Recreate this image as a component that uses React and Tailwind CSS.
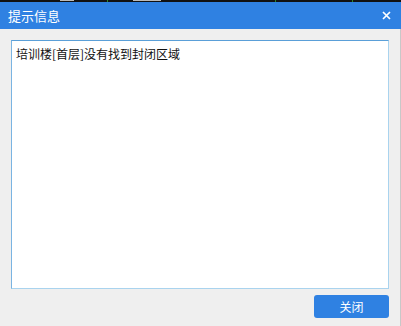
import React from 'react';

const font = { fontFamily: '"Noto Sans CJK SC", "Liberation Sans", sans-serif' };

export default function App() {
  return (
    <div className="w-[401px] h-[326px] flex flex-col bg-[#efefef] overflow-hidden" style={font}>
      {/* strip of the window behind */}
      <div className="h-[2px] bg-[#111] flex">
        <div className="w-[60px]" />
        <div className="w-[14px] bg-[#bbb] h-[1px]" />
        <div className="w-[33px]" />
        <div className="w-px bg-[#2a8a2a]" />
        <div className="w-[25px]" />
        <div className="w-[28px] bg-[#bbb] h-[1px]" />
        <div className="w-[114px]" />
        <div className="w-px bg-[#2a8a2a]" />
        <div className="w-[76px]" />
        <div className="w-px bg-[#2a8a2a]" />
      </div>

      {/* title bar */}
      <div className="h-[27px] bg-[#2f81e2] flex items-center justify-between pl-[8px] pr-[10px]">
        <span className="text-white text-[13px] leading-none">提示信息</span>
        <svg width="9" height="9" viewBox="0 0 9 9">
          <path d="M1 1 L8 8 M8 1 L1 8" stroke="#fff" strokeWidth="1.7" />
        </svg>
      </div>

      {/* body */}
      <div className="flex-1 flex flex-col px-[11px] pt-[11px] border-r border-[#c8c8c8]">
        <div className="h-[249px] bg-white border border-[#a9d3ee] border-t-[#5a9fd8] border-l-[#7ab4e2] px-[4px] pt-[5px]">
          <p className="text-[12px] leading-[16px] text-[#111]">培训楼[首层]没有找到封闭区域</p>
        </div>
        <div className="flex justify-end pt-[6px]">
          <button className="w-[75px] h-[23px] bg-[#2f81e2] rounded-[3px] text-white text-[12px] leading-none">
            关闭
          </button>
        </div>
      </div>
    </div>
  );
}
